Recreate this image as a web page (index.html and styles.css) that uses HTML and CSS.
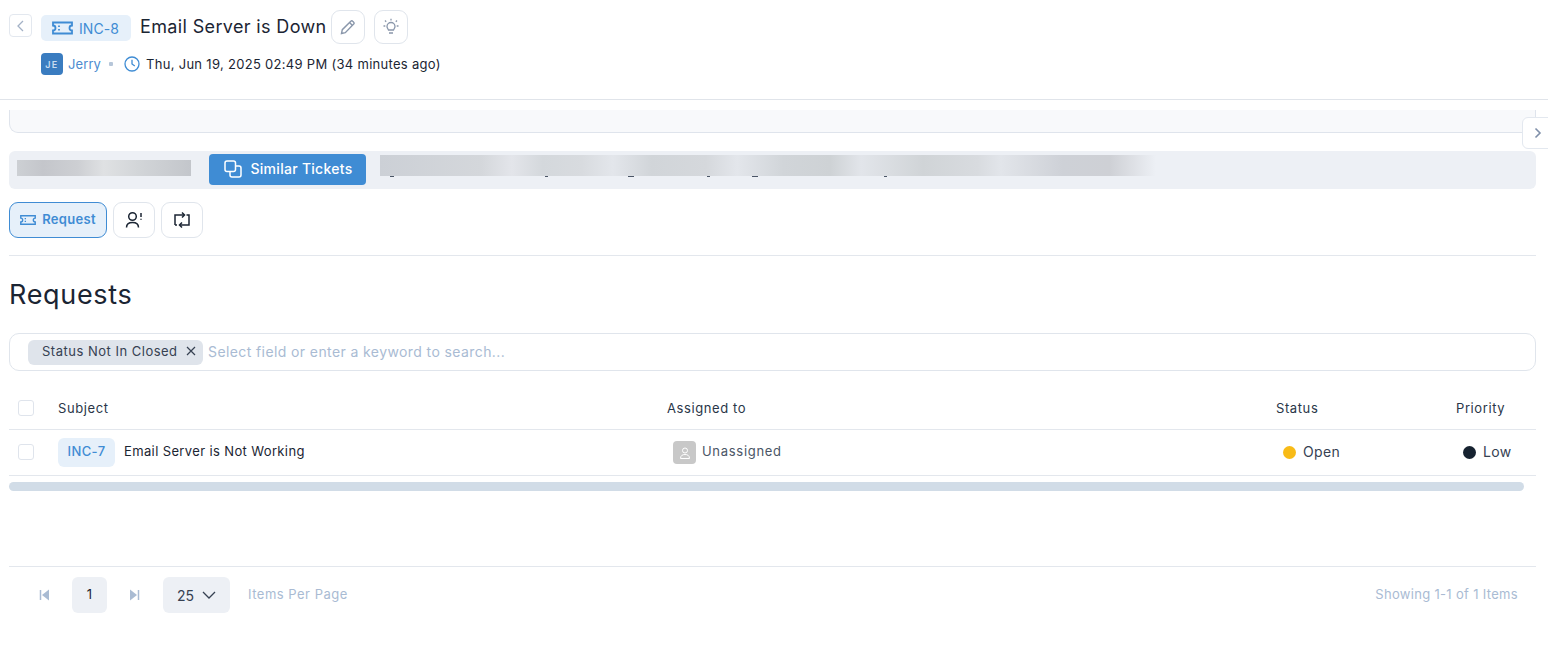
FILE: index.html
```html
<!DOCTYPE html>
<html lang="en">
<head>
<meta charset="utf-8">
<title>INC-8 Email Server is Down</title>
<link rel="stylesheet" href="styles.css">
</head>
<body>
<header class="top">
  <div class="title-row">
    <button class="back"><svg width="14" height="14" viewBox="0 0 14 14"><path d="M9 2 4 7l5 5" fill="none" stroke="#a3b1c6" stroke-width="1.3"/></svg></button>
    <span class="inc-tag">
      <svg width="21" height="14" viewBox="0 0 21 14" fill="none" stroke="#3f8cd4" stroke-width="1.8"><path d="M1 1.500h19v3a2.500 2.500 0 0 0 0 5v3H1v-3a2.500 2.500 0 0 0 0-5z"/><path d="M7 4.500v1.500M7 8v1.500"/></svg>
      INC-8
    </span>
    <h1>Email Server is Down</h1>
    <button class="square"><svg width="18" height="18" viewBox="0 0 18 18" fill="none" stroke="#8a97ab" stroke-width="1.4"><path d="M2.500 15.500l.8-3.800L11.800 3.200a1.300 1.300 0 0 1 1.900 0l1 1a1.300 1.300 0 0 1 0 1.900L6.300 14.700z"/><path d="M10.500 4.500l3 3"/></svg></button>
    <button class="square second"><svg width="18" height="18" viewBox="0 0 18 18" fill="none" stroke="#8a97ab" stroke-width="1.300"><path d="M5 8.500a4 4 0 1 1 8 0c0 1.500-1 2.200-1.500 3.500h-5C6 10.700 5 10 5 8.500zM7 15h4M9 .8v1.700M3 2.500l1.200 1.200M15 2.500l-1.200 1.200M1.500 8h1.800M14.700 8h1.800"/></svg></button>
  </div>
  <div class="meta-row">
    <span class="avatar">JE</span>
    <span class="who">Jerry</span>
    <span class="sep"></span>
    <svg width="16" height="16" viewBox="0 0 16 16" fill="none" stroke="#3f8cd4" stroke-width="1.3"><circle cx="8" cy="8" r="7"/><path d="M8 3.800V8l2.800 2"/></svg>
    <span class="when">Thu, Jun 19, 2025 02:49 PM (34 minutes ago)</span>
  </div>
</header>

<button class="side-tab"><svg width="12" height="14" viewBox="0 0 12 14"><path d="M3.500 2.500 8 7l-4.500 4.500" fill="none" stroke="#7f8fa9" stroke-width="1.600"/></svg></button>

<main class="content">
  <div class="collapsed-card"></div>

  <div class="tool-bar">
    <span class="blur blur-a"></span>
    <button class="similar">
      <svg width="18" height="18" viewBox="0 0 18 18" fill="none" stroke="#fff" stroke-width="1.500"><rect x="1" y="1" width="10.500" height="10.500" rx="2"/><path d="M11.500 6H15a2 2 0 0 1 2 2v7a2 2 0 0 1-2 2H8a2 2 0 0 1-2-2v-3.500"/></svg>
      Similar Tickets
    </button>
    <span class="blur blur-b"></span>
  </div>

  <div class="tabs">
    <button class="tab active">
      <svg width="16" height="12" viewBox="0 0 21 14" fill="none" stroke="#3f8cd4" stroke-width="1.800"><path d="M1 1.500h19v3a2.500 2.500 0 0 0 0 5v3H1v-3a2.500 2.500 0 0 0 0-5z"/><path d="M7 4.500v1.500M7 8v1.500"/></svg>
      <span class="tab-label">Request</span>
    </button>
    <button class="tab icon"><svg width="18" height="18" viewBox="0 0 18 18" fill="none" stroke="#1b2533" stroke-width="1.500"><circle cx="7.500" cy="5.500" r="3.800"/><path d="M1.500 16.500c0-3.500 2.500-5 6-5s6 1.500 6 5M16 2v4M16 7.800v1"/></svg></button>
    <button class="tab icon"><svg width="18" height="18" viewBox="0 0 18 18" fill="none" stroke="#1b2533" stroke-width="1.500"><path d="M2 14V4h9M13.500 4H16v10H7M2 14h2"/><path d="M9 1.500 11.500 4 9 6.500M9 11.500 6.500 14 9 16.500"/></svg></button>
  </div>

  <h2>Requests</h2>

  <div class="search">
    <span class="chip"><span class="chip-label">Status Not In Closed</span> <svg width="10" height="10" viewBox="0 0 10 10"><path d="M1 1l8 8M9 1 1 9" stroke="#364152" stroke-width="1.200"/></svg></span>
    <span class="placeholder">Select field or enter a keyword to search...</span>
  </div>

  <div class="table">
    <div class="row head">
      <span class="check"></span>
      <span>Subject</span>
      <span>Assigned to</span>
      <span>Status</span>
      <span>Priority</span>
    </div>
    <div class="row body">
      <span class="check"></span>
      <span class="subject"><span class="id-tag">INC-7</span><span class="lift">Email Server is Not Working</span></span>
      <span class="assignee"><span class="user-box"><svg width="12" height="12" viewBox="0 0 12 12" fill="none" stroke="#fff" stroke-width="1"><circle cx="6" cy="3.500" r="2.500"/><path d="M1.500 11.500c0-3 2-4 4.500-4s4.500 1 4.500 4z"/></svg></span><span class="lift">Unassigned</span></span>
      <span class="state"><i class="dot open"></i><span class="lift">Open</span></span>
      <span class="state"><i class="dot low"></i><span class="lift">Low</span></span>
    </div>
  </div>
  <div class="scroll-thumb"></div>

  <footer class="pager">
    <svg class="nav" width="14" height="12" viewBox="0 0 14 12"><path d="M2.500 1v10" stroke="#a9bbd3" stroke-width="1.500"/><path d="M11 .5v11L4 6z" fill="#a9bbd3"/></svg>
    <span class="page-num">1</span>
    <svg class="nav" width="14" height="12" viewBox="0 0 14 12"><path d="M11.500 1v10" stroke="#a9bbd3" stroke-width="1.500"/><path d="M3 .5v11L10 6z" fill="#a9bbd3"/></svg>
    <span class="per-page">25 <svg width="14" height="8" viewBox="0 0 14 8"><path d="M1 1l6 6 6-6" fill="none" stroke="#364152" stroke-width="1.300"/></svg></span>
    <span class="muted">Items Per Page</span>
    <span class="muted showing">Showing 1-1 of 1 Items</span>
  </footer>
</main>
</body>
</html>
```
FILE: styles.css
```css
* { box-sizing: border-box; }
html, body { margin: 0; height: 100%; overflow: hidden; }
body { background: #fff; color: #1b2533; font-family: Inter, "Open Sans", sans-serif; font-size: 13px; position: relative; }
button { font: inherit; padding: 0; background: #fff; cursor: pointer; display: inline-flex; align-items: center; justify-content: center; }

.top { height: 100px; border-bottom: 1px solid #e0e4ea; padding: 10px 0 0 9px; }
.title-row { display: flex; align-items: flex-start; }
.back { width: 23px; height: 23px; margin-top: 4px; border: 1px solid #e3e8ef; border-radius: 4px; }
.inc-tag { margin: 5px 0 0 9px; width: 90px; height: 26px; background: #e6f0fa; border-radius: 5px; color: #3f8cd4; font-size: 14px; display: flex; align-items: center; gap: 6px; padding-left: 11px; letter-spacing: .1px; }
h1 { margin: 3px 0 0 9px; font-size: 18px; font-weight: 400; line-height: 28px; width: 191px; white-space: nowrap; letter-spacing: .36px; }
.square { width: 34px; height: 34px; border: 1px solid #e0e5ec; border-radius: 9px; }
.square.second { margin-left: 9px; }
.meta-row { display: flex; align-items: center; margin: 9px 0 0 32px; height: 22px; }
.avatar { width: 22px; height: 22px; border-radius: 4px; background: #3a7cc0; color: #c9dcf0; font-size: 9px; font-weight: 600; letter-spacing: 1.5px; display: flex; align-items: center; justify-content: center; }
.who { color: #4c8bd0; margin-left: 5px; width: 41px; letter-spacing: .1px; padding-bottom: 1px; }
.sep { width: 4px; height: 4px; background: #b6c6d9; border-radius: 1px; margin-right: 11px; }
.when { margin-left: 6px; font-size: 13px; white-space: nowrap; letter-spacing: .3px; padding-bottom: 1px; }

.side-tab { position: absolute; left: 1522px; top: 117px; width: 28px; height: 32px; border: 1px solid #e3e8ef; border-radius: 6px 0 0 6px; padding-left: 3px; }

.content { padding: 0 12px 0 9px; }
.collapsed-card { height: 23px; margin-top: 10px; background: #f8f9fb; border: 1px solid #dfe4ec; border-top: 0; border-radius: 0 0 9px 9px; }
.tool-bar { margin-top: 18px; height: 38px; background: #edf0f5; border-radius: 6px; display: flex; align-items: flex-start; }
.blur { display: block; background-repeat: no-repeat; }
.blur-a { margin: 9px 0 0 8px; width: 174px; height: 16px; background-image: linear-gradient(90deg, #cdd0d4, #c4c6cb 15%, #cdcfd3 35%, #dfe1e3 50%, #d2d5d8 70%, #c3c6cb); }
.similar { margin: 3px 0 0 18px; width: 157px; height: 31px; border: 0; border-radius: 4px; background: #3f8cd4; color: #fff; font-size: 14px; font-weight: 500; gap: 8px; letter-spacing: .28px; padding: 0 0 2px 2px; }
.blur-b { margin: 4px 0 0 14px; width: 776px; height: 23px;
  background-image:
    linear-gradient(#4a5566, #4a5566), linear-gradient(#4a5566, #4a5566), linear-gradient(#4a5566, #4a5566),
    linear-gradient(#4a5566, #4a5566), linear-gradient(#4a5566, #4a5566), linear-gradient(#4a5566, #4a5566),
    linear-gradient(90deg, #ccd0d6, #d4d7db 13%, #e3e5ea 17%, #d4d8dc 21%, #d8dbdf 26%, #e3e6eb 30%, #d1d5d9 35%, #d5d8dc 42%, #e3e6eb 46%, #d1d5d9 52%, #ced2d5 58%, #e2e5ea 62%, #d0d4d7 70%, #d8dbdf 77%, #e2e5ea 80%, #ced1d7 88%, #ced0d5 94%, #edf0f5);
  background-size: 4px 1px, 3px 1px, 6px 1px, 3px 1px, 6px 1px, 3px 1px, 100% 21px;
  background-position: 10px 21px, 165px 21px, 248px 21px, 327px 21px, 372px 21px, 504px 21px, 0 0;
}

.tabs { display: flex; gap: 6px; margin-top: 13px; padding-bottom: 17px; border-bottom: 1px solid #e3e7ed; }
.tab { height: 36px; width: 42px; border: 1px solid #e0e5ec; border-radius: 9px; }
.tab.active { width: 98px; gap: 6px; background: #e6f0fa; border-color: #3f8cd4; color: #3f8cd4; font-weight: 600; font-size: 13px; }
.tab-label { letter-spacing: .3px; padding-bottom: 2px; }

h2 { margin: 22px 0 0; font-size: 27px; line-height: 34px; font-weight: 400; letter-spacing: .68px; color: #1b2533; }

.search { margin-top: 21px; height: 38px; border: 1px solid #e0e5ec; border-radius: 10px; padding-left: 18px; display: flex; align-items: center; gap: 5px; }
.chip { width: 175px; height: 25px; background: #dfe4eb; border-radius: 6px; padding-left: 14px; display: flex; align-items: center; gap: 8px; color: #364152; white-space: nowrap; }
.chip-label { letter-spacing: .5px; padding-bottom: 2px; }
.chip svg { margin-bottom: 2px; }
.placeholder { color: #a9bbd3; font-size: 14px; white-space: nowrap; letter-spacing: .4px; padding-bottom: 2px; }

.table { margin-top: 16px; }
.row { display: grid; grid-template-columns: 49px 609px 609px 180px 80px; align-items: center; border-bottom: 1px solid #e3e7ed; }
.head { height: 43px; letter-spacing: .6px; color: #2a3648; }
.body { height: 46px; letter-spacing: .37px; }
.lift { padding-bottom: 3px; }
.check { width: 16px; height: 16px; margin-left: 9px; border: 1px solid #dfe4ec; border-radius: 3px; }
.body .check { margin-top: -2px; }
.subject { display: flex; align-items: center; gap: 9px; }
.id-tag { width: 57px; height: 29px; background: #e6f0fa; border-radius: 6px; color: #3f8cd4; font-weight: 500; display: flex; align-items: center; justify-content: center; padding-bottom: 3px; }
.assignee { display: flex; align-items: center; gap: 6px; margin-left: 6px; color: #4a5566; letter-spacing: .7px; }
.user-box { width: 23px; height: 23px; border-radius: 4px; background: #c8c8c8; display: flex; align-items: center; justify-content: center; }
.state { display: flex; align-items: center; gap: 7px; margin-left: 7px; color: #364152; font-size: 14px; }
.dot { width: 13px; height: 13px; border-radius: 50%; }
.dot.open { background: #f8bb17; }
.dot.low { background: #162230; }

.scroll-thumb { margin-top: 6px; width: 1515px; height: 9px; border-radius: 5px; background: #d1dce7; }

.pager { margin-top: 75px; border-top: 1px solid #e3e7ed; padding-top: 10px; display: flex; align-items: center; }
.nav { margin-left: 29px; }
.page-num { margin-left: 20px; width: 35px; height: 36px; border-radius: 6px; background: #edf0f5; display: flex; align-items: center; justify-content: center; padding-bottom: 2px; }
.page-num + .nav { margin-left: 20px; }
.per-page { margin-left: 22px; width: 67px; height: 36px; border-radius: 6px; background: #edf0f5; display: flex; align-items: center; justify-content: center; gap: 8px; font-size: 14px; color: #364152; }
.muted { margin-left: 18px; color: #a9bbd3; white-space: nowrap; letter-spacing: .5px; padding-bottom: 3px; }
.showing { margin-left: auto; margin-right: 18px; letter-spacing: .32px; }
```
